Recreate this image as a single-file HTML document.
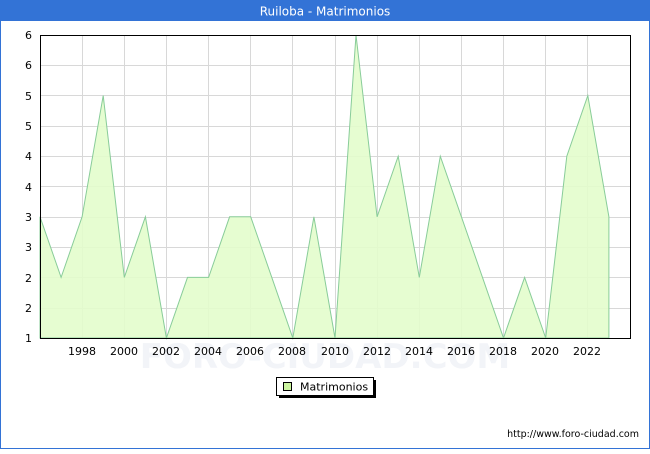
<!DOCTYPE html>
<html><head><meta charset="utf-8"><style>
body{margin:0;width:650px;height:450px;overflow:hidden;background:#fff;font-family:"DejaVu Sans","Liberation Sans",sans-serif}
</style></head><body>
<svg width="650" height="450" xmlns="http://www.w3.org/2000/svg" font-family="DejaVu Sans, Liberation Sans, sans-serif">
<rect x="0.5" y="0.5" width="649" height="448" fill="#fff" stroke="#3373d6" stroke-width="1"/>
<rect x="0" y="0" width="650" height="21" fill="#3373d6"/>
<text x="325" y="15.5" text-anchor="middle" font-size="12" fill="#fff">Ruiloba - Matrimonios</text>
<g stroke="#d8d8d8" stroke-width="1">
<line x1="40" y1="65.5" x2="630" y2="65.5"/><line x1="40" y1="95.5" x2="630" y2="95.5"/><line x1="40" y1="126.5" x2="630" y2="126.5"/><line x1="40" y1="156.5" x2="630" y2="156.5"/><line x1="40" y1="186.5" x2="630" y2="186.5"/><line x1="40" y1="217.5" x2="630" y2="217.5"/><line x1="40" y1="247.5" x2="630" y2="247.5"/><line x1="40" y1="277.5" x2="630" y2="277.5"/><line x1="40" y1="308.5" x2="630" y2="308.5"/>
<line x1="82.5" y1="35" x2="82.5" y2="338"/><line x1="124.5" y1="35" x2="124.5" y2="338"/><line x1="166.5" y1="35" x2="166.5" y2="338"/><line x1="208.5" y1="35" x2="208.5" y2="338"/><line x1="250.5" y1="35" x2="250.5" y2="338"/><line x1="292.5" y1="35" x2="292.5" y2="338"/><line x1="335.5" y1="35" x2="335.5" y2="338"/><line x1="377.5" y1="35" x2="377.5" y2="338"/><line x1="419.5" y1="35" x2="419.5" y2="338"/><line x1="461.5" y1="35" x2="461.5" y2="338"/><line x1="503.5" y1="35" x2="503.5" y2="338"/><line x1="545.5" y1="35" x2="545.5" y2="338"/><line x1="587.5" y1="35" x2="587.5" y2="338"/>
</g>
<text x="325" y="368" text-anchor="middle" font-size="34" fill="#f2f4f8" font-weight="bold">FORO-CIUDAD.COM</text>
<polygon fill="#e3fdcc" fill-opacity="0.9" stroke="#88cc99" stroke-width="1" points="40,338 40,216.8 61.1,277.4 82.1,216.8 103.2,95.6 124.3,277.4 145.4,216.8 166.4,338 187.5,277.4 208.6,277.4 229.6,216.8 250.7,216.8 271.8,277.4 292.8,338 313.9,216.8 335,338 356,35 377.1,216.8 398.2,156.2 419.3,277.4 440.3,156.2 461.4,216.8 482.5,277.4 503.5,338 524.6,277.4 545.7,338 566.8,156.2 587.8,95.6 608.9,216.8 608.9,338"/>
<rect x="40.5" y="35.5" width="590" height="303" fill="none" stroke="#000" stroke-width="1"/>
<g font-size="11" fill="#000" text-anchor="end">
<text x="32" y="39">6</text><text x="32" y="69">6</text><text x="32" y="100">5</text><text x="32" y="130">5</text><text x="32" y="160">4</text><text x="32" y="191">4</text><text x="32" y="221">3</text><text x="32" y="251">3</text><text x="32" y="282">2</text><text x="32" y="312">2</text><text x="32" y="342">1</text>
</g>
<g font-size="11" fill="#000" text-anchor="middle">
<text x="82" y="355">1998</text><text x="124" y="355">2000</text><text x="166" y="355">2002</text><text x="208" y="355">2004</text><text x="250" y="355">2006</text><text x="292" y="355">2008</text><text x="335" y="355">2010</text><text x="377" y="355">2012</text><text x="419" y="355">2014</text><text x="461" y="355">2016</text><text x="503" y="355">2018</text><text x="545" y="355">2020</text><text x="587" y="355">2022</text>
</g>
<rect x="279" y="380" width="97" height="18" fill="#000"/>
<rect x="276.5" y="377.5" width="97" height="18" fill="#fff" stroke="#000"/>
<rect x="283.5" y="382.5" width="8" height="8" fill="#ccf5a0" stroke="#000"/>
<text x="300" y="390.5" font-size="11" fill="#000">Matrimonios</text>
<text x="639" y="437" text-anchor="end" font-size="9.5" fill="#000">http://www.foro-ciudad.com</text>
</svg>
</body></html>
